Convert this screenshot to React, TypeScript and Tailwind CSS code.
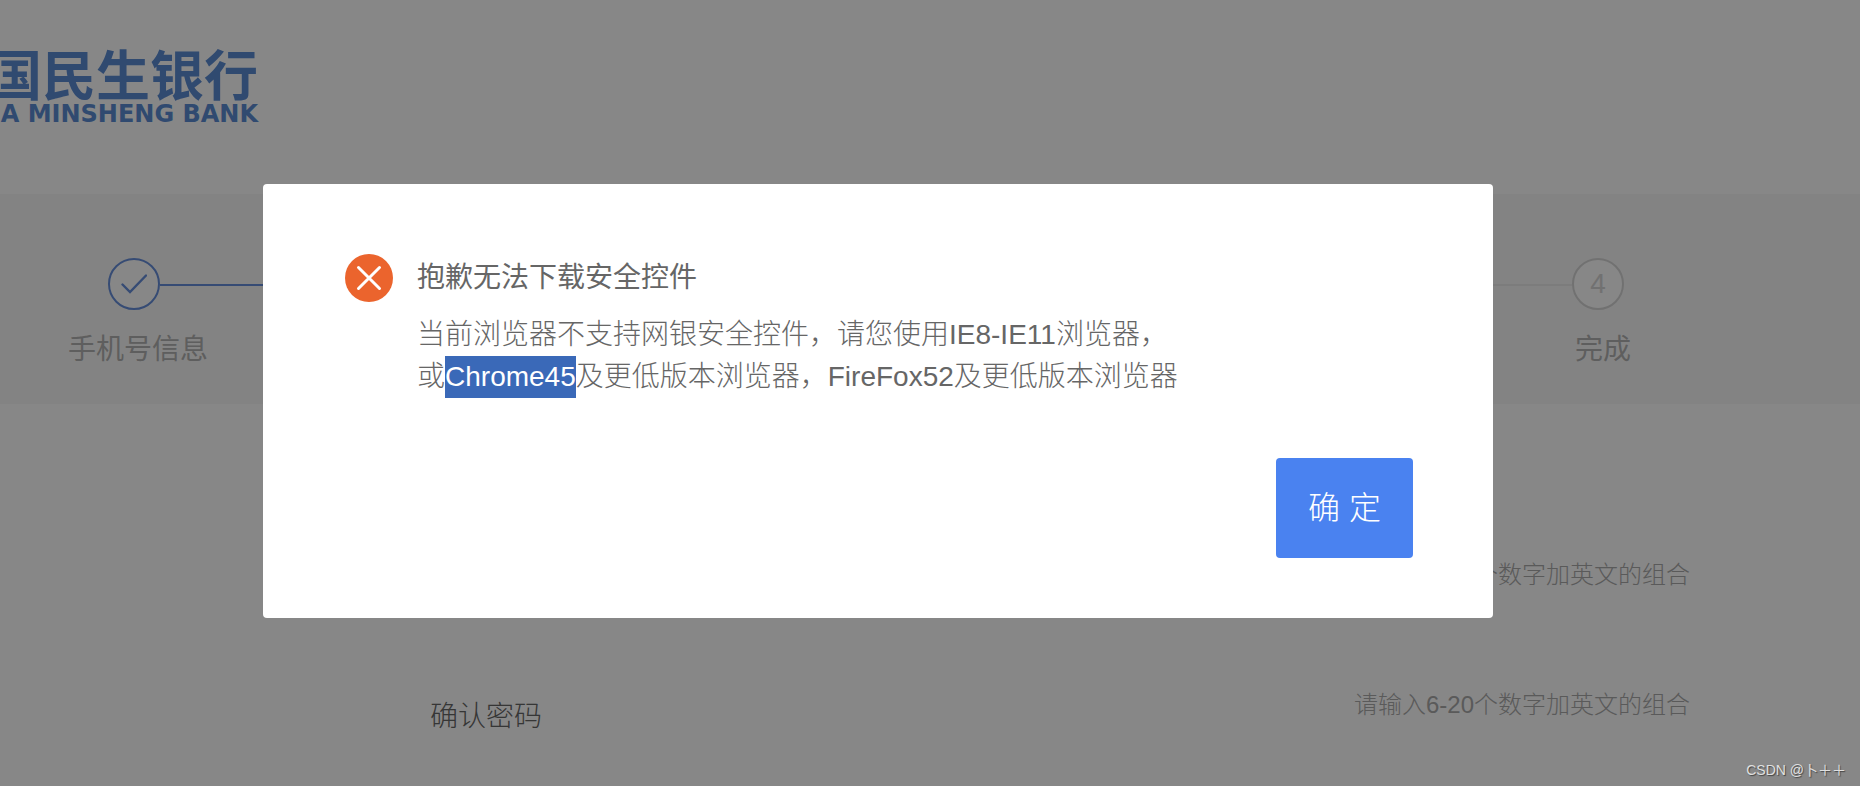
import { Fragment } from 'react';

const steps = [
  { id: 1, label: '手机号信息', done: true },
  { id: 4, label: '完成', done: false },
];

const fields = [
  { id: 'password', label: '', hint: '请输入6-20个数字加英文的组合' },
  { id: 'confirm', label: '确认密码', hint: '请输入6-20个数字加英文的组合' },
];

function Logo() {
  return (
    <a href="#" className="flex w-[258px] flex-col items-end whitespace-nowrap text-[#5c8cd3]">
      <span className="text-[54px] font-bold leading-[50px]">国民生银行</span>
      <span className="font-['DejaVu_Sans',sans-serif] text-2xl font-bold leading-6">A MINSHENG BANK</span>
    </a>
  );
}

function Stepper() {
  return (
    <nav className="h-[210px] bg-[#f8f8f8] pt-16">
      <div className="flex items-center pl-[108px] pr-[236px]">
        {steps.map((step) => (
          <Fragment key={step.id}>
            {!step.done && <div className="mt-0.5 h-0.5 flex-1 bg-[#eaeaea]" />}
            <div
              className={
                step.done
                  ? 'flex size-[52px] items-center justify-center rounded-full border-2 border-[#668fdb] bg-white text-[#668fdb]'
                  : 'flex size-[52px] items-center justify-center rounded-full border-2 border-[#d6d6d6] bg-white text-[28px] text-[#d6d6d6]'
              }
            >
              {step.done ? (
                <svg width="26" height="20" viewBox="0 0 26 20" fill="none" stroke="currentColor" strokeWidth="2.4" strokeLinecap="round">
                  <path d="M1.5 10.5L9 18L25 1.5" />
                </svg>
              ) : (
                step.id
              )}
            </div>
            {step.done && <div className="mt-0.5 h-0.5 flex-1 bg-[#668fdb]" />}
          </Fragment>
        ))}
      </div>
      <div className="flex justify-between pl-[68px] pr-[229px] pt-[19px] text-[28px] leading-[42px] text-[#b2b2b2]">
        {steps.map((step) => (
          <span key={step.id}>{step.label}</span>
        ))}
      </div>
    </nav>
  );
}

function Dialog() {
  return (
    <div className="absolute inset-0 bg-black/47 pl-[263px] pr-[367px] pt-[184px]">
      <div role="alertdialog" aria-labelledby="dialog-title" className="flex flex-col rounded bg-white px-20 pb-[60px] pt-[70px] text-[28px] leading-[42px] text-[#666]">
        <div className="flex gap-6 pl-0.5">
          <svg className="size-12 shrink-0" viewBox="0 0 48 48">
            <circle cx="24" cy="24" r="24" fill="#eb642d" />
            <path d="M13.5 13.5L34.5 34.5M34.5 13.5L13.5 34.5" stroke="#fff" strokeWidth="3" strokeLinecap="round" />
          </svg>
          <div className="pt-[3px]">
            <h2 id="dialog-title" className="mb-[15px]">抱歉无法下载安全控件</h2>
            <p className="font-light">
              当前浏览器不支持网银安全控件，请您使用IE8-IE11浏览器，
              <br />
              或<span className="inline-block bg-[#3a69b8] text-white">Chrome45</span>
              及更低版本浏览器，FireFox52及更低版本浏览器
            </p>
          </div>
        </div>
        <button type="button" className="mt-[60px] h-[100px] self-end rounded bg-[#4a82f0] px-8 text-[32px] font-light text-white">
          确 定
        </button>
      </div>
    </div>
  );
}

export default function App() {
  return (
    <div className="relative min-h-screen overflow-hidden bg-white font-['Liberation_Sans','Noto_Sans_CJK_SC',sans-serif]">
      <header className="h-[194px] pt-[52px]">
        <Logo />
      </header>
      <Stepper />
      <form className="flex flex-col gap-[88px] pl-[430px] pr-[170px] pt-[150px]">
        {fields.map((field) => (
          <div key={field.id} className="flex h-[42px] items-center justify-between">
            <span className="pt-6 text-[28px] font-light text-[#666]">{field.label}</span>
            <span className="text-2xl font-light text-[#aaa]">{field.hint}</span>
          </div>
        ))}
      </form>
      <Dialog />
      <span className="absolute bottom-1.5 right-3.5 text-sm text-[#e0e0e0] [text-shadow:1px_1px_1px_#444]">CSDN @卜＋＋</span>
    </div>
  );
}
